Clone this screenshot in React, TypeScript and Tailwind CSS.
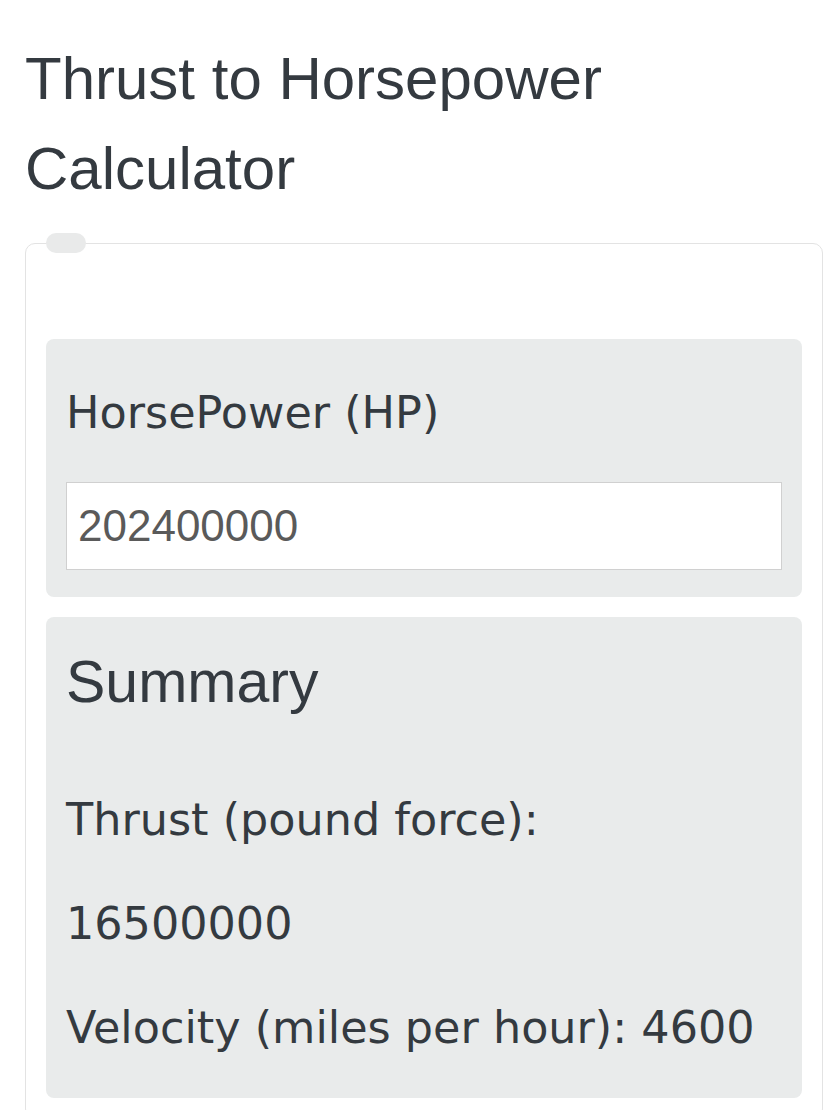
import { useState } from 'react'

export default function App() {
  const [hp, setHp] = useState('202400000')

  return (
    <div className="min-h-[1110px] bg-white pl-[25px] pt-[34px] text-[#343a40]">
      <h1 className="w-[798px] font-['Liberation_Sans',Arial,sans-serif] text-[60px] leading-[90px] font-normal">
        Thrust to Horsepower Calculator
      </h1>

      {/* Calculator card */}
      <div className="relative mt-[29px] w-[798px] rounded-[10px] border border-[#e3e3e3] px-[20px] pt-[95px] pb-[20px]">
        <span className="absolute left-[20px] top-[-11px] h-[20px] w-[40px] rounded-full bg-[#e9eaea]" />

        {/* Input panel */}
        <div className="rounded-[8px] bg-[#e9ebeb] px-[20px] pt-[44px] pb-[27px]">
          <label className="block font-['DejaVu_Sans',Verdana,sans-serif] text-[44.5px] leading-[60px]">
            HorsePower (HP)
          </label>
          <input
            value={hp}
            onChange={(e) => setHp(e.target.value)}
            className="mt-[39px] block h-[88px] w-full border border-[#d0d0d0] bg-white px-[11px] font-['Liberation_Sans',Arial,sans-serif] text-[44px] text-[#5a5a5a] outline-none"
          />
        </div>

        {/* Summary panel */}
        <div className="mt-[20px] rounded-[8px] bg-[#e9ebeb] px-[20px] pt-[30px] pb-[40px]">
          <h2 className="font-['Liberation_Sans',Arial,sans-serif] text-[59px] leading-[70px] font-normal">
            Summary
          </h2>
          <div className="mt-[73px] flex flex-col gap-[44px] font-['DejaVu_Sans',Verdana,sans-serif] text-[44.5px] leading-[60px]">
            <p>Thrust (pound force):</p>
            <p>16500000</p>
            <p>Velocity (miles per hour): 4600</p>
          </div>
        </div>
      </div>
    </div>
  )
}
